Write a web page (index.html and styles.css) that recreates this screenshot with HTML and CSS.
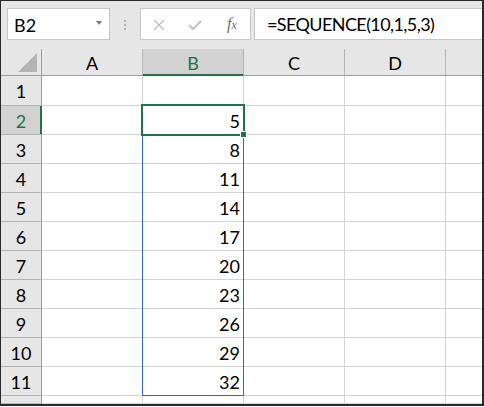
FILE: index.html
```
<!DOCTYPE html>
<html>
<head>
<meta charset="utf-8">
<link rel="stylesheet" href="styles.css">
</head>
<body>
<div class="frame">
  <div class="toolbar">
    <div class="namebox"><span class="name">B2</span><span class="caret"></span></div>
    <div class="dots"><i></i><i></i><i></i></div>
    <div class="fbuttons">
      <svg class="ico x" width="12" height="12" viewBox="0 0 12 12"><path d="M1 1L11 11M11 1L1 11" stroke="#bdbdbd" stroke-width="1.3" fill="none"/></svg>
      <svg class="ico chk" width="14" height="10" viewBox="0 0 14 10"><path d="M1 5L5 9L13 1" stroke="#c4c4c4" stroke-width="2.2" fill="none"/></svg>
      <span class="fx">f<span class="sub">x</span></span>
    </div>
    <div class="formula">=SEQUENCE(10,1,5,3)</div>
  </div>
  <div class="sheet">
    <div class="corner"><span class="tri"></span></div>
    <div class="ch">A</div>
    <div class="ch sel">B</div>
    <div class="ch">C</div>
    <div class="ch">D</div>
    <div class="ch last"></div>

    <div class="rh">1</div><div class="c"></div><div class="c"></div><div class="c"></div><div class="c"></div><div class="c last"></div>
    <div class="rh sel">2</div><div class="c"></div><div class="c n">5</div><div class="c"></div><div class="c"></div><div class="c last"></div>
    <div class="rh">3</div><div class="c"></div><div class="c n">8</div><div class="c"></div><div class="c"></div><div class="c last"></div>
    <div class="rh">4</div><div class="c"></div><div class="c n">11</div><div class="c"></div><div class="c"></div><div class="c last"></div>
    <div class="rh">5</div><div class="c"></div><div class="c n">14</div><div class="c"></div><div class="c"></div><div class="c last"></div>
    <div class="rh">6</div><div class="c"></div><div class="c n">17</div><div class="c"></div><div class="c"></div><div class="c last"></div>
    <div class="rh">7</div><div class="c"></div><div class="c n">20</div><div class="c"></div><div class="c"></div><div class="c last"></div>
    <div class="rh">8</div><div class="c"></div><div class="c n">23</div><div class="c"></div><div class="c"></div><div class="c last"></div>
    <div class="rh">9</div><div class="c"></div><div class="c n">26</div><div class="c"></div><div class="c"></div><div class="c last"></div>
    <div class="rh">10</div><div class="c"></div><div class="c n">29</div><div class="c"></div><div class="c"></div><div class="c last"></div>
    <div class="rh">11</div><div class="c"></div><div class="c n">32</div><div class="c"></div><div class="c"></div><div class="c last"></div>
    <div class="rh"></div><div class="c"></div><div class="c"></div><div class="c"></div><div class="c"></div><div class="c last"></div>

    <div class="range"></div>
    <div class="active"></div>
    <div class="handle"></div>
  </div>
</div>
</body>
</html>
```
FILE: styles.css
```
* { box-sizing: border-box; }
html, body { margin: 0; padding: 0; background: #fff; }
body { font-family: Lato, "Liberation Sans", sans-serif; }

.frame {
  width: 484px;
  height: 406px;
  border-style: solid;
  border-color: #2a2a2a;
  border-width: 1px 2px 2px 1px;
  background: #e6e6e6;
  overflow: hidden;
}

.toolbar {
  height: 48px;
  display: flex;
  align-items: flex-start;
  padding-top: 7px;
  padding-left: 6px;
  background: #e6e6e6;
}

.namebox {
  width: 103px;
  height: 32px;
  background: #fff;
  border: 1px solid #c6c6c6;
  display: flex;
  align-items: center;
  justify-content: space-between;
  padding: 0 7px 0 6px;
}
.name { font-size: 18px; color: #000; line-height: 1; margin-top: 1px; }
.caret {
  width: 0; height: 0;
  border-left: 3.5px solid transparent;
  border-right: 3.5px solid transparent;
  border-top: 4px solid #7a7a7a;
  margin-top: -2px;
}

.dots {
  width: 30px;
  height: 32px;
  display: flex;
  flex-direction: column;
  align-items: center;
  justify-content: center;
  gap: 2px;
  padding-top: 1px;
}
.dots i { display: block; width: 2px; height: 2px; background: #b0b0b0; }

.fbuttons {
  width: 111px;
  height: 32px;
  background: #fff;
  border: 1px solid #c6c6c6;
  display: flex;
  align-items: center;
  padding-left: 12px;
}
.ico { display: block; }
.x { margin-left: 0; margin-top: 1px; }
.chk { margin-left: 23px; margin-top: 2px; }
.fx {
  margin-left: 25px;
  font-family: "Liberation Serif", serif;
  font-style: italic;
  font-size: 16px;
  color: #6f6f6f;
  line-height: 1;
}
.fx .sub { font-size: 12px; }

.formula {
  flex: 1;
  height: 32px;
  margin-left: 3px;
  background: #fff;
  border: 1px solid #c6c6c6;
  border-right: none;
  font-size: 18px;
  letter-spacing: -0.6px;
  line-height: 30px;
  padding-left: 12px;
  color: #000;
  white-space: nowrap;
}

.sheet {
  position: relative;
  display: grid;
  grid-template-columns: 41px 101px 101px 101px 101px 1fr;
  grid-template-rows: 27px 30px repeat(10, 29px) 1fr;
  height: 355px;
  background: #fff;
}

.corner, .ch {
  background: #e6e6e6;
  border-right: 1px solid #b4b4b4;
  border-bottom: 1px solid #9e9e9e;
}
.corner { position: relative; border-right-color: #9e9e9e; }
.tri {
  position: absolute;
  left: 17px;
  top: 4px;
  width: 0; height: 0;
  border-left: 19px solid transparent;
  border-bottom: 19px solid #b5b5b5;
}
.ch {
  font-size: 18px;
  text-align: center;
  line-height: 28px;
  color: #000;
}
.ch.sel {
  background: #d2d2d2;
  color: #217346;
  border-bottom-color: #217346;
  box-shadow: inset 0 -1px 0 #217346;
}
.ch.last { border-right: none; }

.rh {
  background: #e6e6e6;
  border-right: 1px solid #9e9e9e;
  border-bottom: 1px solid #b4b4b4;
  font-size: 18px;
  text-align: center;
  line-height: 30px;
  color: #000;
}
.rh.sel {
  background: #d2d2d2;
  color: #217346;
  border-right-color: #217346;
  box-shadow: inset -1px 0 0 #217346;
}

.c {
  border-right: 1px solid #d4d4d4;
  border-bottom: 1px solid #d4d4d4;
  font-size: 18px;
  color: #000;
}
.c.last { border-right: none; }
.c.n {
  text-align: right;
  padding-right: 3px;
  line-height: 30px;
}

.range {
  position: absolute;
  left: 141px;
  top: 56px;
  width: 102px;
  height: 291px;
  border: 1px solid #3465c3;
}
.active {
  position: absolute;
  left: 140px;
  top: 55px;
  width: 104px;
  height: 32px;
  border: 2px solid #217346;
}
.handle {
  position: absolute;
  left: 239px;
  top: 82px;
  width: 7px;
  height: 7px;
  background: #217346;
  border: 1px solid #fff;
}
```
